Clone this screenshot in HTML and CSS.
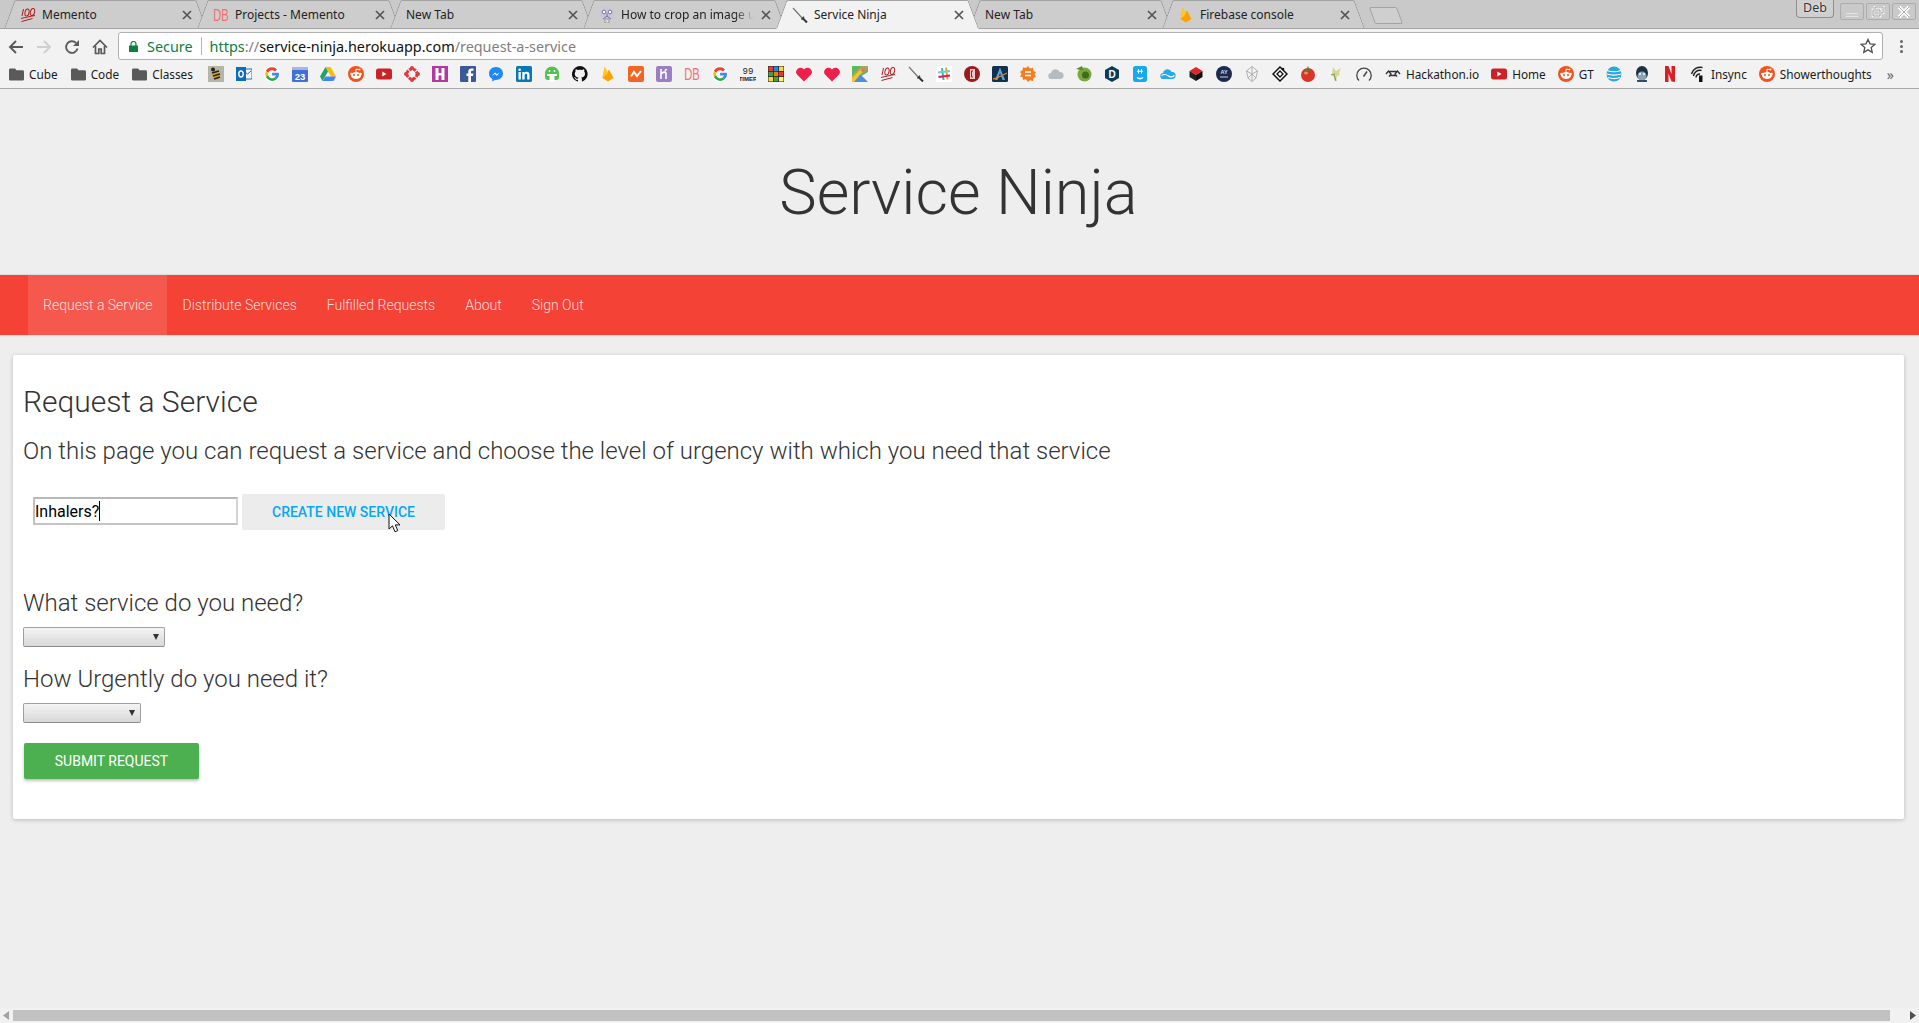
FILE: index.html
```html
<!DOCTYPE html>
<html lang="en">
<head>
<meta charset="utf-8">
<title>Service Ninja</title>
<link rel="stylesheet" href="styles.css">
</head>
<body>
<svg class="defs" width="0" height="0" aria-hidden="true">
  <symbol id="i-close" viewBox="0 0 12 12"><path d="M2 2l8 8M10 2l-8 8" stroke="#555" stroke-width="1.700" fill="none"/></symbol>
  <symbol id="i-hundred" viewBox="0 0 16 16"><g fill="none" stroke="#b01c1c" stroke-width="1"><path d="M3.500 2 2 9"/><ellipse cx="7" cy="5.500" rx="2" ry="3.600" transform="rotate(12 7 5.500)"/><ellipse cx="12.500" cy="5" rx="2.100" ry="3.600" transform="rotate(12 12.500 5)"/><path d="M1 11.500c4-1 9-2 14-3M1.500 14.500c4-1 7-2 11-3"/></g></symbol>
  <symbol id="i-sword" viewBox="0 0 16 16"><path d="M1 1 11 12" stroke="#777" stroke-width="1.200"/><path d="M9.500 12.500 12 9.800" stroke="#333" stroke-width="1.400"/><path d="M11 11.500 15 15.500" stroke="#333" stroke-width="2"/></symbol>
  <symbol id="i-db" viewBox="0 0 16 16"><text x="8" y="14" font-family="Liberation Sans" font-size="17" fill="#f26d6d" text-anchor="middle" textLength="15.500" lengthAdjust="spacingAndGlyphs">DB</text></symbol>
  <symbol id="i-fire" viewBox="0 0 16 16"><path d="M2.500 12 4.600 1l3 5 1.400-2.600L13.500 12 8 15.500z" fill="#ffa000"/><path d="M2.500 12 4.600 1 8 7z" fill="#ffca28"/></symbol>
  <symbol id="i-folder" viewBox="0 0 16 14"><path d="M1.500 1h5L8 3h6.500A1.500 1.500 0 0 1 16 4.500v8a1.500 1.500 0 0 1-1.500 1.500h-13A1.500 1.500 0 0 1 0 12.500v-10A1.500 1.500 0 0 1 1.500 1z" fill="#5a5a5a"/></symbol>
  <symbol id="i-g" viewBox="0 0 16 16"><circle cx="8" cy="8" r="8" fill="#fff"/><g transform="translate(8 8) scale(1.250) translate(-8 -8)"><path d="M12 4.300A5.500 5.500 0 0 0 3.100 5.600L5 7a3.200 3.200 0 0 1 5.300-1z" fill="#ea4335"/><path d="M3.100 5.600a5.500 5.500 0 0 0 0 4.800L5 9a3.200 3.200 0 0 1 0-2z" fill="#fbbc05"/><path d="M3.100 10.400a5.500 5.500 0 0 0 8.600 1.700L10 10.700A3.200 3.200 0 0 1 5 9z" fill="#34a853"/><path d="M13.500 7H8.100v2.200h3.100a2.600 2.600 0 0 1-1.200 1.500l1.700 1.400A5.500 5.500 0 0 0 13.500 7z" fill="#4285f4"/></g></symbol>
  <symbol id="i-reddit" viewBox="0 0 16 16"><circle cx="8" cy="8" r="8" fill="#f4511e"/><ellipse cx="8" cy="9.500" rx="5" ry="3.600" fill="#fff"/><circle cx="3.500" cy="8" r="1.300" fill="#fff"/><circle cx="12.500" cy="8" r="1.300" fill="#fff"/><circle cx="6" cy="9" r="1" fill="#f4511e"/><circle cx="10" cy="9" r="1" fill="#f4511e"/><path d="M8 6V3l3 .7" stroke="#fff" fill="none"/><circle cx="11.500" cy="3.500" r="1" fill="#fff"/></symbol>
  <symbol id="i-yt" viewBox="0 0 16 16"><rect y="2.500" width="16" height="11" rx="2.500" fill="#cc2127"/><path d="M6.300 5.500v5l4.200-2.500z" fill="#fff"/></symbol>
  <symbol id="i-heart" viewBox="0 0 16 16"><path d="M8 15.500 1 8.500A4.200 4.200 0 0 1 1.500 3 4.300 4.300 0 0 1 8 3.500 4.300 4.300 0 0 1 14.500 3 4.200 4.200 0 0 1 15 8.500z" fill="#ef1f4b"/></symbol>
  <symbol id="i-bee" viewBox="0 0 16 16"><rect width="16" height="16" fill="#b5b5a8"/><ellipse cx="8" cy="9" rx="3.500" ry="5" fill="#d9a520" transform="rotate(-20 8 9)"/><path d="M4 7l7-2M5 10l7-2M6 13l6-2" stroke="#222" stroke-width="1.400"/><circle cx="5" cy="3.500" r="2" fill="#222"/></symbol>
  <symbol id="i-outlook" viewBox="0 0 16 16"><rect x="7" y="3" width="9" height="10" fill="#fff" stroke="#0f6cbd"/><path d="M8 5l3.500 3L15 5" stroke="#0f6cbd" fill="none"/><rect y="1" width="10" height="14" fill="#0f6cbd"/><ellipse cx="5" cy="8" rx="2.200" ry="3" fill="none" stroke="#fff" stroke-width="1.400"/></symbol>
  <symbol id="i-cal" viewBox="0 0 16 16"><rect y="1" width="16" height="15" rx="1" fill="#3f6fd8"/><rect y="1" width="16" height="3" fill="#a9b8d8"/><text x="8" y="13.500" font-family="Liberation Sans" font-size="9.500" font-weight="700" fill="#fff" text-anchor="middle">23</text></symbol>
  <symbol id="i-drive" viewBox="0 0 16 16"><path d="M5.500 1h5L16 10.500h-5z" fill="#fbbc05"/><path d="M5.500 1 0 10.500 2.500 15 8 5.500z" fill="#1fa463"/><path d="M5.500 10.500H16L13.500 15h-11z" fill="#4285f4"/></symbol>
  <symbol id="i-lifesaver" viewBox="0 0 16 16"><circle cx="8" cy="8" r="5" fill="none" stroke="#e0393e" stroke-width="3" stroke-dasharray="3 1"/><circle cx="8" cy="2" r="2" fill="#e0393e"/><circle cx="8" cy="14" r="2" fill="#e0393e"/><circle cx="2" cy="8" r="2" fill="#e0393e"/><circle cx="14" cy="8" r="2" fill="#e0393e"/></symbol>
  <symbol id="i-h" viewBox="0 0 16 16"><rect width="16" height="16" fill="#b23a9e"/><path d="M3.500 2h3v5h3V2h3v12h-3V9.500h-3V14h-3z" fill="#fff"/></symbol>
  <symbol id="i-fb" viewBox="0 0 16 16"><rect width="16" height="16" rx="1" fill="#3b5998"/><path d="M11 16v-6h2l.4-2.500H11V6c0-.8.300-1.200 1.200-1.200h1.300V2.500h-2C9.500 2.500 8.300 3.700 8.300 5.700v1.800H6.500V10h1.800v6z" fill="#fff"/></symbol>
  <symbol id="i-msg" viewBox="0 0 16 16"><path d="M8 1c4 0 7 2.900 7 6.500S12 14 8 14l-1-.1L4.300 15.500V13C2.300 11.800 1 9.800 1 7.500 1 3.900 4 1 8 1z" fill="#1e88f5"/><path d="M3.800 9.800 7 6.500l1.700 1.700 3.200-1.700-3.200 3.300L7 8.100z" fill="#fff"/></symbol>
  <symbol id="i-li" viewBox="0 0 16 16"><rect width="16" height="16" rx="1.500" fill="#0a77b5"/><path d="M2.500 6h2.300v7.500H2.500zM6.300 6h2.200v1c.5-.8 1.300-1.200 2.300-1.200 1.900 0 2.700 1.200 2.700 3.200v4.500h-2.300V9.400c0-1-.3-1.600-1.200-1.600s-1.400.6-1.400 1.700v4H6.300z" fill="#fff"/><circle cx="3.600" cy="3.700" r="1.300" fill="#fff"/></symbol>
  <symbol id="i-android" viewBox="0 0 16 16"><path d="M8 .5a7 7 0 0 1 7 7V11a3 3 0 0 1-3 3H4a3 3 0 0 1-3-3V7.500a7 7 0 0 1 7-7z" fill="#4fc24f"/><path d="M3 8h10v2H3zM5.500 10h5v5.500h-5z" fill="#fff"/><circle cx="5.500" cy="5" r="1" fill="#fff"/><circle cx="10.500" cy="5" r="1" fill="#fff"/></symbol>
  <symbol id="i-github" viewBox="0 0 16 16"><path d="M8 0a8 8 0 0 0-2.500 15.600c.4.100.5-.2.500-.4v-1.400c-2.200.5-2.700-1-2.700-1-.4-.9-.9-1.200-.9-1.200-.7-.5.100-.5.100-.5.800.1 1.200.8 1.200.8.700 1.200 1.900.9 2.300.7.100-.5.300-.9.500-1.100-1.800-.2-3.700-.9-3.700-4 0-.9.300-1.600.8-2.100-.1-.2-.4-1 .1-2.100 0 0 .7-.2 2.200.8a7.600 7.600 0 0 1 4 0c1.500-1 2.200-.8 2.200-.8.400 1.100.2 1.900.1 2.100.5.600.8 1.300.8 2.100 0 3.100-1.900 3.700-3.700 3.900.3.300.6.800.6 1.500v2.200c0 .2.100.5.500.4A8 8 0 0 0 8 0z" fill="#111"/></symbol>
  <symbol id="i-nuzzel" viewBox="0 0 16 16"><rect width="16" height="16" rx="2" fill="#f26522"/><path d="M3 10.500 6 6l3 4 4-5" stroke="#fff" stroke-width="2" fill="none"/></symbol>
  <symbol id="i-heroku" viewBox="0 0 16 16"><rect width="16" height="16" rx="2" fill="#9a7fc4"/><path d="M5 3v10M5 8c2-2 4-2 5-1v6M10.500 3 9 5" stroke="#fff" stroke-width="1.600" fill="none"/></symbol>
  <symbol id="i-timer" viewBox="0 0 16 16"><text x="8" y="8" font-family="Liberation Mono" font-size="9" fill="#222" text-anchor="middle">99</text><text x="8" y="15" font-family="Liberation Sans" font-size="6" font-weight="700" fill="#222" text-anchor="middle">TIMER</text></symbol>
  <symbol id="i-rubik" viewBox="0 0 16 16"><rect width="16" height="16" fill="#222"/><rect x=".5" y=".5" width="4.500" height="4.500" fill="#e53935"/><rect x="5.750" y=".5" width="4.500" height="4.500" fill="#1e88e5"/><rect x="11" y=".5" width="4.500" height="4.500" fill="#fdd835"/><rect x=".5" y="5.750" width="4.500" height="4.500" fill="#43a047"/><rect x="5.750" y="5.750" width="4.500" height="4.500" fill="#f57c00"/><rect x="11" y="5.750" width="4.500" height="4.500" fill="#e53935"/><rect x=".5" y="11" width="4.500" height="4.500" fill="#fdd835"/><rect x="5.750" y="11" width="4.500" height="4.500" fill="#43a047"/><rect x="11" y="11" width="4.500" height="4.500" fill="#fff176"/></symbol>
  <symbol id="i-maps" viewBox="0 0 16 16"><rect width="16" height="16" fill="#5cb85c"/><path d="M0 16V9L9 0h7v3z" fill="#c5a35a" opacity=".7"/><path d="M0 16 16 6v10z" fill="#f2f2f2"/><path d="M0 16 8 8l8 8z" fill="#4a90e2"/><path d="M0 12 10 2l2 2L2 16H0z" fill="#fbc02d"/><circle cx="11" cy="4" r="2" fill="#ef6c6c"/></symbol>
  <symbol id="i-slack" viewBox="0 0 16 16"><rect width="16" height="16" fill="#fff"/><path d="M6 2 7.500 14" stroke="#3eb991" stroke-width="2"/><path d="M10 1.500 11.500 13.500" stroke="#e9a820" stroke-width="2"/><path d="M2 6.500 14 5" stroke="#6ecadc" stroke-width="2"/><path d="M2.500 11 14 9.500" stroke="#e01563" stroke-width="2"/></symbol>
  <symbol id="i-cred" viewBox="0 0 16 16"><circle cx="8" cy="8" r="8" fill="#9b1c1c"/><rect x="6" y="3" width="5" height="10" fill="#e9c9c9"/><path d="M9 5H7.500v6H9" stroke="#9b1c1c" fill="none"/></symbol>
  <symbol id="i-arc" viewBox="0 0 16 16"><rect width="16" height="16" rx="1.500" fill="#12314f"/><path d="M8 1.500 3 14h2.500L8 7l2.500 7H13z" fill="#5aa7e0"/><path d="M1 13C6 12 11 9 15 7" stroke="#f57c00" stroke-width="1.300" fill="none"/></symbol>
  <symbol id="i-burst" viewBox="0 0 16 16"><path d="M8 0l2 2.500 3-.8.500 3 2.500 1.500L14.500 8l1.500 2.700-2.500 1.300-.5 3-3-.7L8 16l-2-2.700-3 .7-.5-3L0 10.700 1.500 8 0 5.700l2.500-1.500.5-3 3 .8z" fill="#f57c1f"/><path d="M5 6h6M5 9.500h6" stroke="#fff" stroke-width="1.500"/></symbol>
  <symbol id="i-cloud" viewBox="0 0 16 16"><path d="M3.500 13a3 3 0 0 1-.4-6A4.500 4.500 0 0 1 11.700 6 3.500 3.500 0 0 1 12.500 13z" fill="#b5bcc0"/></symbol>
  <symbol id="i-green" viewBox="0 0 16 16"><circle cx="8.500" cy="8.500" r="7" fill="#7ba83b"/><circle cx="9.500" cy="9" r="3.500" fill="#3e6a22"/><path d="M0 3 6 0l1.500 4.500z" fill="#5d8a2c"/></symbol>
  <symbol id="i-dhex" viewBox="0 0 16 16"><path d="M8 0l7 4v8l-7 4-7-4V4z" fill="#0c3b57"/><text x="8" y="12" font-family="Liberation Sans" font-size="10" font-weight="700" fill="#fff" text-anchor="middle">D</text></symbol>
  <symbol id="i-blue" viewBox="0 0 16 16"><rect x="1" width="14" height="16" rx="2.500" fill="#14a9f0"/><path d="M5 11.500c2 1.500 4 1.500 6 0" stroke="#fff" stroke-width="1.500" fill="none"/><path d="M6.500 3v4.500M9.500 3v4.500M5 5.200h6" stroke="#fff"/></symbol>
  <symbol id="i-onedrive" viewBox="0 0 16 16"><path d="M3.500 13a3 3 0 0 1-.4-6A4.500 4.500 0 0 1 11.700 6 3.500 3.500 0 0 1 12.500 13z" fill="#29a8e8"/><path d="M1.500 9.500c3-2 5-1 7 .5s4 1 6-.5" stroke="#fff" stroke-width="1.100" fill="none"/></symbol>
  <symbol id="i-cube" viewBox="0 0 16 16"><path d="M8 1l6.500 4-6.500 4L1.500 5z" fill="#e3242b"/><path d="M1.500 5 8 9v6L1.500 11z" fill="#222"/><path d="M14.500 5 8 9v6l6.500-4z" fill="#111"/></symbol>
  <symbol id="i-ay" viewBox="0 0 16 16"><circle cx="8" cy="8" r="8" fill="#1d2a4d"/><text x="8" y="8" font-family="Liberation Sans" font-size="5.500" font-weight="700" fill="#dde" text-anchor="middle">AY</text><path d="M4 11h8" stroke="#99a" stroke-width="1.500"/></symbol>
  <symbol id="i-wire" viewBox="0 0 16 16"><path d="M8 .5 13.500 5 12 12l-4 3.500L4 12 2.500 5zM2.500 5 8 8l5.500-3M8 8v7.500M4 12l4-4 4 4M8 .5V8" fill="none" stroke="#aaa" stroke-width=".9"/></symbol>
  <symbol id="i-diamond" viewBox="0 0 16 16"><path d="M8 1l7 7-7 7-7-7z" fill="#fff" stroke="#111" stroke-width="1.500"/><path d="M5 8l3-3 3 3-3 3z" fill="none" stroke="#111" stroke-width="1.300"/><circle cx="11" cy="3" r="1.300" fill="#111"/></symbol>
  <symbol id="i-tomato" viewBox="0 0 16 16"><circle cx="8" cy="9" r="7" fill="#d9352a"/><ellipse cx="6" cy="7" rx="2" ry="1.500" fill="#ef8a75"/><path d="M4.500 3 8 4l3.500-1-2 2.300H6.500z" fill="#3b8a2e"/><path d="M8 .5v3" stroke="#3b8a2e" stroke-width="1.200"/></symbol>
  <symbol id="i-pika" viewBox="0 0 16 16"><path d="M5 1l3 4 5-3-2 5 1 2-3 1-1 5-2-1 .5-3-2.500-2z" fill="#d9d68a"/><path d="M8 15 6 9M3 9l4-1" stroke="#7da56a" stroke-width="1.200"/></symbol>
  <symbol id="i-gauge" viewBox="0 0 16 16"><path d="M3 14.500A7.200 7.200 0 1 1 13 14.500" fill="none" stroke="#444" stroke-width="1.300"/><path d="M7.500 10.500 11 5.500" stroke="#444" stroke-width="1.500"/></symbol>
  <symbol id="i-hack" viewBox="0 0 16 16"><path d="M1 8l2.500-3 2.500 3-2 2.500M15 8l-2.500-3L10 8l2 2.500M4 5.500h8M5 9.500h6" fill="none" stroke="#333" stroke-width="1.400"/></symbol>
  <symbol id="i-att" viewBox="0 0 16 16"><circle cx="8" cy="8" r="7.500" fill="#2aa7dd"/><path d="M1 4.500c4 1.500 10 1.500 14 0M.5 8c5 1.500 10 1.500 15 0M2 11.500c4 1.500 8 1.500 12 0" stroke="#fff" stroke-width="1.100" fill="none"/></symbol>
  <symbol id="i-gorilla" viewBox="0 0 16 16"><ellipse cx="8" cy="7" rx="6" ry="7" fill="#1b3040"/><ellipse cx="8" cy="10" rx="4.500" ry="4.500" fill="#8da2b5"/><circle cx="6" cy="8" r="1" fill="#fff"/><circle cx="10" cy="8" r="1" fill="#fff"/><path d="M3 14h10v2H3z" fill="#2f5066"/></symbol>
  <symbol id="i-netflix" viewBox="0 0 16 16"><path d="M3 0h3.500l3 8V0H13v16l-3.500-.5-3-8V16L3 16z" fill="#d81f26"/></symbol>
  <symbol id="i-insync" viewBox="0 0 16 16"><path d="M1.500 8a9 9 0 0 1 11-6.500M3.500 10a6.500 6.500 0 0 1 8-5.500M6 11.500a3.500 3.500 0 0 1 4-3.500" fill="none" stroke="#222" stroke-width="1.500"/><rect x="9" y="9.500" width="3.500" height="6.500" fill="#111"/></symbol>
</svg>

<header class="tabstrip">
  <div class="tab tab-first"><svg class="fav"><use href="#i-hundred"/></svg><span class="tab-title">Memento</span><svg class="tab-x"><use href="#i-close"/></svg></div>
  <div class="tab"><svg class="fav"><use href="#i-db"/></svg><span class="tab-title">Projects - Memento</span><svg class="tab-x"><use href="#i-close"/></svg></div>
  <div class="tab"><span class="tab-title">New Tab</span><svg class="tab-x"><use href="#i-close"/></svg></div>
  <div class="tab">
    <svg class="fav" viewBox="0 0 16 16"><circle cx="8" cy="7" r="7" fill="#c9c6d8"/><circle cx="5" cy="5" r="1.800" fill="#fff" stroke="#7d6fa8"/><circle cx="11" cy="5" r="1.800" fill="#fff" stroke="#7d6fa8"/><path d="M8 6v4M4 12l4-3 4 3" stroke="#7d6fa8" fill="none"/><rect x="6" y="12" width="4" height="4" fill="#ddd" stroke="#999"/></svg>
    <span class="tab-title tab-fade">How to crop an image u</span><svg class="tab-x"><use href="#i-close"/></svg></div>
  <div class="tab tab-active"><svg class="fav"><use href="#i-sword"/></svg><span class="tab-title">Service Ninja</span><svg class="tab-x"><use href="#i-close"/></svg></div>
  <div class="tab"><span class="tab-title">New Tab</span><svg class="tab-x"><use href="#i-close"/></svg></div>
  <div class="tab"><svg class="fav"><use href="#i-fire"/></svg><span class="tab-title">Firebase console</span><svg class="tab-x"><use href="#i-close"/></svg></div>
  <div class="newtab"></div>
  <div class="winctl">
    <span class="profile">Deb</span>
    <span class="winbtn"><svg width="14" height="10" viewBox="0 0 14 10"><path d="M1 8h12" stroke="#fff" stroke-width="3"/><path d="M1 8h12" stroke="#999" stroke-width="1"/></svg></span>
    <span class="winbtn"><svg width="14" height="12" viewBox="0 0 14 12"><path d="M4 3V1h8v6h-2M2 4h7v6H2z" fill="none" stroke="#fff" stroke-width="2.500"/><path d="M4 3V1h8v6h-2M2 4h7v6H2z" fill="none" stroke="#999"/></svg></span>
    <span class="winbtn"><svg width="14" height="12" viewBox="0 0 14 12"><path d="M2 1l10 10M12 1 2 11" stroke="#fff" stroke-width="3.500"/><path d="M2 1l10 10M12 1 2 11" stroke="#aaa"/></svg></span>
  </div>
</header>

<nav class="toolbar">
  <span class="tool"><svg width="16" height="16" viewBox="0 0 16 16"><path d="M15 8H2M8 2 2 8l6 6" fill="none" stroke="#5a5a5a" stroke-width="1.900"/></svg></span>
  <span class="tool"><svg width="16" height="16" viewBox="0 0 16 16"><path d="M1 8h13M8 2l6 6-6 6" fill="none" stroke="#cfcfcf" stroke-width="1.900"/></svg></span>
  <span class="tool"><svg width="16" height="16" viewBox="0 0 16 16"><path d="M13.500 9.500A5.800 5.800 0 1 1 12 4" fill="none" stroke="#5a5a5a" stroke-width="1.900"/><path d="M15 1v6H9z" fill="#5a5a5a"/></svg></span>
  <span class="tool"><svg width="16" height="16" viewBox="0 0 16 16"><path d="M1 8.500 8 1.500l7 7M3.500 7v7.500h3.300V10h2.400v4.500h3.300V7" fill="none" stroke="#5a5a5a" stroke-width="1.700"/></svg></span>
  <div class="omnibox">
    <svg class="lock" width="9" height="11" viewBox="0 0 9 11"><path d="M2 5V3a2.500 2.500 0 0 1 5 0v2" fill="none" stroke="#0b8043" stroke-width="1.200"/><rect y="4.500" width="9" height="6.500" rx=".5" fill="#0b8043"/></svg>
    <span class="secure">Secure</span>
    <span class="omni-sep"></span>
    <span class="url"><span class="u-https">https</span><span class="u-dim">://</span><span class="u-host">service-ninja.herokuapp.com</span><span class="u-dim">/request-a-service</span></span>
    <svg class="star" width="16" height="16" viewBox="0 0 16 16"><path d="M8 1.500l2 4.400 4.800.5-3.600 3.200 1 4.700L8 11.900l-4.200 2.400 1-4.700L1.200 6.400 6 5.900z" fill="none" stroke="#555" stroke-width="1.400"/></svg>
  </div>
  <span class="menu-dots"><i></i><i></i><i></i></span>
</nav>

<nav class="bookmarks">
  <span class="bm bm-folder"><svg class="bm-i-f"><use href="#i-folder"/></svg>Cube</span>
  <span class="bm bm-folder"><svg class="bm-i-f"><use href="#i-folder"/></svg>Code</span>
  <span class="bm bm-folder bm-last-folder"><svg class="bm-i-f"><use href="#i-folder"/></svg>Classes</span>
  <span class="bi"><svg class="fav"><use href="#i-bee"/></svg></span>
  <span class="bi"><svg class="fav"><use href="#i-outlook"/></svg></span>
  <span class="bi"><svg class="fav"><use href="#i-g"/></svg></span>
  <span class="bi"><svg class="fav"><use href="#i-cal"/></svg></span>
  <span class="bi"><svg class="fav"><use href="#i-drive"/></svg></span>
  <span class="bi"><svg class="fav"><use href="#i-reddit"/></svg></span>
  <span class="bi"><svg class="fav"><use href="#i-yt"/></svg></span>
  <span class="bi"><svg class="fav"><use href="#i-lifesaver"/></svg></span>
  <span class="bi"><svg class="fav"><use href="#i-h"/></svg></span>
  <span class="bi"><svg class="fav"><use href="#i-fb"/></svg></span>
  <span class="bi"><svg class="fav"><use href="#i-msg"/></svg></span>
  <span class="bi"><svg class="fav"><use href="#i-li"/></svg></span>
  <span class="bi"><svg class="fav"><use href="#i-android"/></svg></span>
  <span class="bi"><svg class="fav"><use href="#i-github"/></svg></span>
  <span class="bi"><svg class="fav"><use href="#i-fire"/></svg></span>
  <span class="bi"><svg class="fav"><use href="#i-nuzzel"/></svg></span>
  <span class="bi"><svg class="fav"><use href="#i-heroku"/></svg></span>
  <span class="bi"><svg class="fav"><use href="#i-db"/></svg></span>
  <span class="bi"><svg class="fav"><use href="#i-g"/></svg></span>
  <span class="bi"><svg class="fav"><use href="#i-timer"/></svg></span>
  <span class="bi"><svg class="fav"><use href="#i-rubik"/></svg></span>
  <span class="bi"><svg class="fav"><use href="#i-heart"/></svg></span>
  <span class="bi"><svg class="fav"><use href="#i-heart"/></svg></span>
  <span class="bi"><svg class="fav"><use href="#i-maps"/></svg></span>
  <span class="bi"><svg class="fav"><use href="#i-hundred"/></svg></span>
  <span class="bi"><svg class="fav"><use href="#i-sword"/></svg></span>
  <span class="bi"><svg class="fav"><use href="#i-slack"/></svg></span>
  <span class="bi"><svg class="fav"><use href="#i-cred"/></svg></span>
  <span class="bi"><svg class="fav"><use href="#i-arc"/></svg></span>
  <span class="bi"><svg class="fav"><use href="#i-burst"/></svg></span>
  <span class="bi"><svg class="fav"><use href="#i-cloud"/></svg></span>
  <span class="bi"><svg class="fav"><use href="#i-green"/></svg></span>
  <span class="bi"><svg class="fav"><use href="#i-dhex"/></svg></span>
  <span class="bi"><svg class="fav"><use href="#i-blue"/></svg></span>
  <span class="bi"><svg class="fav"><use href="#i-onedrive"/></svg></span>
  <span class="bi"><svg class="fav"><use href="#i-cube"/></svg></span>
  <span class="bi"><svg class="fav"><use href="#i-ay"/></svg></span>
  <span class="bi"><svg class="fav"><use href="#i-wire"/></svg></span>
  <span class="bi"><svg class="fav"><use href="#i-diamond"/></svg></span>
  <span class="bi"><svg class="fav"><use href="#i-tomato"/></svg></span>
  <span class="bi"><svg class="fav"><use href="#i-pika"/></svg></span>
  <span class="bi bi-gap-lg"><svg class="fav"><use href="#i-gauge"/></svg></span>
  <span class="bm"><svg class="fav"><use href="#i-hack"/></svg>Hackathon.io</span>
  <span class="bm"><svg class="fav"><use href="#i-yt"/></svg>Home</span>
  <span class="bm bm-tight"><svg class="fav"><use href="#i-reddit"/></svg>GT</span>
  <span class="bi"><svg class="fav"><use href="#i-att"/></svg></span>
  <span class="bi"><svg class="fav"><use href="#i-gorilla"/></svg></span>
  <span class="bi bi-gap"><svg class="fav"><use href="#i-netflix"/></svg></span>
  <span class="bm"><svg class="fav"><use href="#i-insync"/></svg>Insync</span>
  <span class="bm"><svg class="fav"><use href="#i-reddit"/></svg>Showerthoughts</span>
  <span class="bm-more">»</span>
</nav>

<main class="page">
  <div class="site-header"><h1 class="site-title">Service Ninja</h1></div>
  <nav class="site-nav">
    <a class="nav-link nav-active">Request a Service</a>
    <a class="nav-link">Distribute Services</a>
    <a class="nav-link">Fulfilled Requests</a>
    <a class="nav-link">About</a>
    <a class="nav-link">Sign Out</a>
  </nav>
  <section class="card">
    <h2 class="card-title">Request a Service</h2>
    <p class="card-lead">On this page you can request a service and choose the level of urgency with which you need that service</p>
    <div class="new-service">
      <span class="input-wrap"><input class="svc-input" type="text" value="Inhalers?" readonly><span class="caret"></span></span>
      <button class="btn-flat" type="button">CREATE NEW SERVICE</button>
      <svg class="pointer" width="14" height="21" viewBox="0 0 14 21"><path d="M1 1v15l3.500-3.200 2.500 6 2.800-1.200-2.500-5.700H12z" fill="#fff" stroke="#111"/></svg>
    </div>
    <h3 class="field-label field-first">What service do you need?</h3>
    <span class="sel-wrap sel-wide"><select class="sel"></select></span>
    <h3 class="field-label">How Urgently do you need it?</h3>
    <span class="sel-wrap sel-narrow"><select class="sel"></select></span>
    <button class="btn-submit" type="button">SUBMIT REQUEST</button>
  </section>
  <div class="hscroll">
    <span class="arrow arrow-l"></span>
    <span class="thumb"></span>
    <span class="arrow arrow-r"></span>
  </div>
</main>
</body>
</html>
```
FILE: styles.css
```css
* { box-sizing: border-box; }
html, body { height: 100%; }
body {
  margin: 0;
  display: flex;
  flex-direction: column;
  overflow: hidden;
  font-family: "Noto Sans", sans-serif;
  font-size: 12px;
  color: #111;
  background: #eee;
}
.defs { position: absolute; }
.fav { width: 16px; height: 16px; flex: none; display: block; }

/* tabs */
.tabstrip {
  height: 29px;
  flex: none;
  display: flex;
  padding-left: 4px;
  background: #c9c9c9;
  border-bottom: 1px solid #a3a3a3;
}
.tab {
  position: relative;
  width: 203px;
  height: 29px;
  margin-right: -10px;
  padding: 0 14px 0 16px;
  display: flex;
  align-items: center;
  gap: 6px;
  flex: none;
  z-index: 1;
}
.tab::before, .tab::after {
  content: "";
  position: absolute;
  top: 0;
  bottom: 0;
  width: 55%;
  background: #cdcdcd;
  border-top: 1px solid #a3a3a3;
  border-bottom: 1px solid #a3a3a3;
  z-index: -1;
}
.tab::before {
  left: 0;
  border-left: 1px solid #969696;
  border-top-left-radius: 2px;
  transform: skewX(-20deg);
  transform-origin: bottom left;
}
.tab::after {
  right: 0;
  border-right: 1px solid #969696;
  border-top-right-radius: 2px;
  transform: skewX(20deg);
  transform-origin: bottom right;
}
.tab-active { z-index: 2; }
.tab-active::before, .tab-active::after { background: #f2f2f2; border-bottom-color: #f2f2f2; }
.tab-title { flex: 1; min-width: 0; white-space: nowrap; overflow: hidden; color: #222; }
.tab-fade {
  -webkit-mask-image: linear-gradient(to right, #000 85%, transparent);
  mask-image: linear-gradient(to right, #000 85%, transparent);
}
.tab-x { flex: none; width: 12px; height: 12px; display: block; }
.newtab {
  width: 28px;
  height: 17px;
  margin: 7px 0 0 17px;
  flex: none;
  background: #cfcfcf;
  border: 1px solid #a3a3a3;
  border-radius: 2px;
  transform: skewX(20deg);
}
.winctl {
  margin-left: auto;
  display: flex;
  gap: 2px;
  padding-right: 3px;
  height: 20px;
}
.profile {
  width: 38px;
  height: 18px;
  margin-right: 4px;
  background: #cfcfcf;
  border: 1px solid #8f8f8f;
  border-top: 0;
  border-radius: 0 0 4px 4px;
  text-align: center;
  line-height: 16px;
  font-size: 12.500px;
  color: #333;
  text-shadow: 0 0 2px #fff;
}
.winbtn {
  width: 24px;
  height: 17px;
  margin-top: 3px;
  display: flex;
  align-items: center;
  justify-content: center;
  background: #c9c9c9;
  border: 1px solid #acacac;
  border-radius: 2px;
}

/* toolbar */
.toolbar {
  height: 31px;
  flex: none;
  display: flex;
  align-items: flex-end;
  background: #f2f2f2;
  padding: 0 36px 0 2px;
  position: relative;
}
.tool { width: 28px; height: 27px; display: flex; align-items: center; justify-content: center; flex: none; }
.omnibox {
  flex: 1;
  height: 28px;
  margin-left: 4px;
  display: flex;
  align-items: center;
  background: #fff;
  border: 1px solid #b0b0b0;
  border-radius: 3px;
  padding: 0 6px 0 10px;
  font-size: 14.400px;
}
.secure { margin-left: 9px; color: #0b8043; }
.omni-sep { width: 1px; height: 18px; margin: 0 8px 0 8px; background: #b5b5b5; }
.url { flex: 1; white-space: nowrap; color: #111; }
.u-https { color: #0b8043; }
.u-dim { color: #808080; }
.u-host { color: #111; }
.menu-dots {
  position: absolute;
  right: 16px;
  top: 11px;
  display: flex;
  flex-direction: column;
  gap: 2px;
}
.menu-dots i { width: 3px; height: 3px; border-radius: 50%; background: #666; display: block; }

/* bookmarks */
.bookmarks {
  height: 29px;
  flex: none;
  display: flex;
  align-items: center;
  background: #f2f2f2;
  border-bottom: 1px solid #aaa;
  padding-left: 9px;
  white-space: nowrap;
  color: #1a1a1a;
  font-size: 11.800px;
}
.bm { display: flex; align-items: center; gap: 5px; margin-right: 12px; flex: none; }
.bm-folder { margin-right: 13px; }
.bm-last-folder { margin-right: 9px; }
.bm-tight { margin-right: 6px; }
.bm-i-f { width: 15px; height: 14px; flex: none; }
.bi { width: 28px; display: flex; justify-content: center; flex: none; }
.bi-gap { margin-right: 6px; }
.bi-gap-lg { margin-right: 7px; }
.bm-more { margin-left: 3px; font-size: 14px; color: #666; }

/* page */
.page {
  flex: 1;
  min-height: 0;
  display: flex;
  flex-direction: column;
  position: relative;
  background: #eee;
  font-family: Roboto, sans-serif;
}
.site-header {
  height: 186px;
  flex: none;
  padding: 69px 2px 0 0;
  text-align: center;
}
.site-title {
  margin: 0;
  font-size: 63px;
  font-weight: 300;
  line-height: 70px;
  color: #333;
}
.site-nav {
  height: 60px;
  flex: none;
  display: flex;
  padding-left: 28px;
  background: #f44336;
  box-shadow: 0 0 2px rgba(0,0,0,.2);
}
.nav-link {
  padding: 0 15px;
  line-height: 60px;
  font-size: 14px;
  font-weight: 300;
  color: rgba(255,255,255,.82);
}
.nav-active { background: rgba(255,255,255,.12); padding-right: 14px; margin-right: 1px; }
.card {
  flex: none;
  height: 464px;
  margin: 20px 15px 0 13px;
  padding: 30px 10px 0;
  background: #fff;
  border-radius: 2px;
  box-shadow: 0 1px 4px rgba(0,0,0,.22);
  color: #333;
}
.card-title { margin: 0; font-size: 30px; font-weight: 300; line-height: 34px; }
.card-lead { margin: 16px 0 0; font-size: 24px; font-weight: 300; line-height: 32px; }
.new-service {
  margin: 27px 0 0 10px;
  display: flex;
  align-items: center;
  gap: 4px;
  position: relative;
}
.input-wrap { position: relative; display: block; margin-bottom: 2px; }
.svc-input {
  display: block;
  width: 205px;
  height: 28px;
  padding: 0;
  border: 2px solid #c4c4c4;
  border-color: #b8b8b8 #d4d4d4 #c4c4c4 #c0c0c0;
  font: 16px Roboto, sans-serif;
  color: #000;
  outline: 0;
}
.caret { position: absolute; left: 66px; top: 4px; width: 1px; height: 20px; background: #000; }
.btn-flat {
  width: 203px;
  height: 36px;
  border: 0;
  border-radius: 2px;
  background: #ececec;
  font: 500 14px Roboto, sans-serif;
  color: #03a9f4;
}
.pointer { position: absolute; left: 355px; top: 19px; }
.field-label { margin: 0; font-size: 24px; font-weight: 300; line-height: 32px; }
.field-first { margin-top: 57px; }
.sel-wrap { display: block; position: relative; height: 20px; margin: 8px 0 0; }
.sel-wide { width: 142px; }
.sel-narrow { width: 118px; }
.sel-wrap + .field-label { margin-top: 16px; }
.sel-wrap::after {
  content: "";
  position: absolute;
  right: 6px;
  top: 7px;
  border-style: solid;
  border-width: 6px 3.500px 0;
  border-color: #333 transparent transparent;
}
.sel {
  display: block;
  width: 100%;
  height: 20px;
  appearance: none;
  -webkit-appearance: none;
  border: 1px solid #a0a0a0;
  border-bottom-color: #8c8c8c;
  border-radius: 2px;
  background: linear-gradient(#f4f4f4, #d8d8d8);
}
.btn-submit {
  display: block;
  width: 175px;
  height: 36px;
  margin: 20px 0 0 1px;
  border: 0;
  border-radius: 2px;
  background: #4caf50;
  box-shadow: 0 2px 3px rgba(0,0,0,.25);
  font: 400 14px Roboto, sans-serif;
  color: #fff;
}
.hscroll {
  margin-top: auto;
  height: 15px;
  flex: none;
  display: flex;
  align-items: center;
  padding: 0 3px;
  background: #f1f1f1;
}
.thumb { height: 11px; background: #c1c1c1; margin: 0 20px 0 4px; flex: 1; }
.arrow { width: 6px; height: 9px; flex: none; }
.arrow-l { background: #a3a3a3; clip-path: polygon(100% 0, 100% 100%, 0 50%); }
.arrow-r { background: #505050; clip-path: polygon(0 0, 100% 50%, 0 100%); }
```
